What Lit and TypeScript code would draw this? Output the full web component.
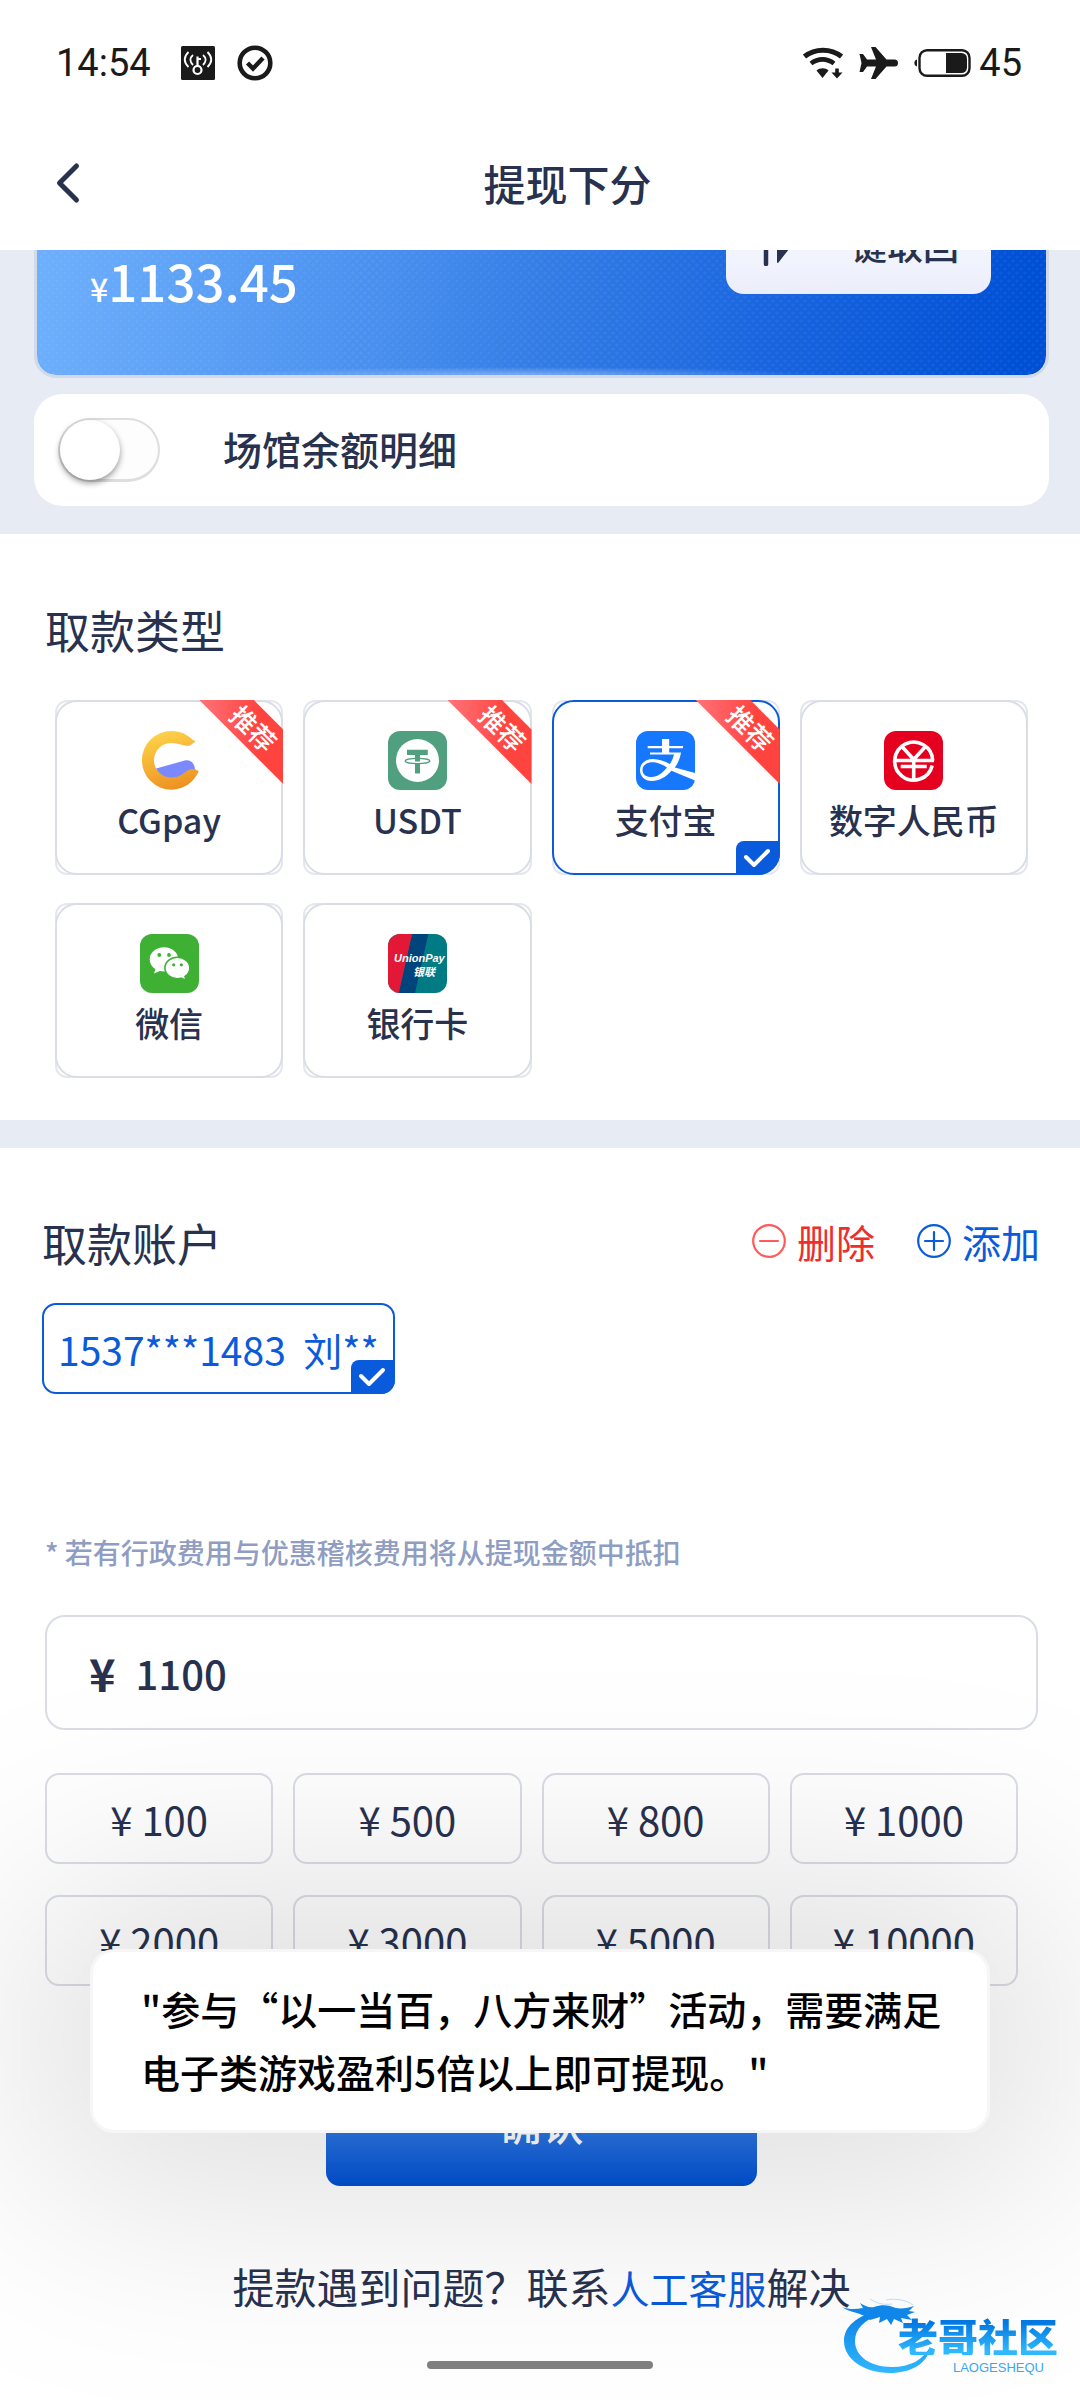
import { LitElement, html, css, svg, nothing } from "lit";
import { customElement, state } from "lit/decorators.js";
import { classMap } from "lit/directives/class-map.js";

interface PayType {
  id: string;
  label: string;
  hot?: boolean;
}

const PAY_TYPES: PayType[] = [
  { id: "cgpay", label: "CGpay", hot: true },
  { id: "usdt", label: "USDT", hot: true },
  { id: "alipay", label: "支付宝", hot: true },
  { id: "ecny", label: "数字人民币" },
  { id: "wechat", label: "微信" },
  { id: "union", label: "银行卡" },
];

const AMOUNTS = [100, 500, 800, 1000, 2000, 3000, 5000, 10000];

const PAY_ICONS: Record<string, unknown> = {
  cgpay: svg`
    <defs>
      <linearGradient id="gold" x1="0.3" y1="0" x2="0.6" y2="1">
        <stop offset="0" stop-color="#fed34a" />
        <stop offset="1" stop-color="#ed9121" />
      </linearGradient>
    </defs>
    <path fill="#7b89ff" d="M16 37.4 44 29.8C50 28 55 32 55 39 45 38 44 47 31.3 47 24 47 18.500 43 16 37.400z" />
    <path fill="url(#gold)" d="M55.700 10C52 13 50 15.500 45.500 14.800 41 14 37 12 31.300 12A17.300 17.300 0 1 0 31.300 46.600C44 46.600 45 38 53 38 55.500 38 57 39.300 58.700 40.300 54 51.500 43.500 58.700 31.300 58.700A29.300 29.300 0 1 1 31.300 0C41 0 48 4 52.500 8.800 53.500 9.600 54.500 9.800 55.700 10z" />`,
  usdt: svg`
    <rect width="59" height="59" rx="12" fill="#50a080" />
    <circle cx="29.500" cy="29.500" r="21.500" fill="#fff" />
    <path fill="#50a080" d="M19 18.700h20.800V24H32v18.500h-5V24h-8z" />
    <path fill="#fff" d="M26 30.500h7v2h-7z" />
    <ellipse cx="29.500" cy="30" rx="12.400" ry="2.600" fill="none" stroke="#50a080" stroke-width="1.200" />`,
  alipay: svg`
    <rect width="59" height="59" rx="12" fill="#1677ff" />
    <g fill="#fff">
      <path d="M26 8h7.200v7H47v2.200H33.200v4.200H45c-1 6-3.200 11-6.200 15.200L59 42v7.500L35.500 39.800C29.500 46.500 23 50 16 50 8 50 4 45 4 39c0-6.500 5.500-11 13-11 6 0 11.500 2.400 17 5 1.800-2.800 3.200-6 4-9.400H14v-2.200h12v-4.200H11.700V15H26z" />
    </g>
    <path fill="#1677ff" d="M31 36.500c-5-3.200-9.500-5.200-14.500-5.200-6 0-10 3.200-10 7.700 0 4.400 3.500 7 9 7 6 0 11-4 15.500-9.500z" />`,
  ecny: svg`
    <rect width="59" height="59" rx="12" fill="#e6001f" />
    <g fill="none" stroke="#fff" stroke-width="3.600">
      <path d="M48.700 29.500A19 19 0 1 0 48.200 34.500" />
      <path d="M9.500 29.500H50M16.700 35.500H42.700M29.700 28v21M17.500 15l12.200 13.500L42 15" />
    </g>`,
  wechat: svg`
    <rect width="59" height="59" rx="12" fill="#3eb135" />
    <path fill="#fff" d="M24 13.200c7.900 0 14.300 5.300 14.300 12S31.900 37.400 24 37.400c-1.500 0-2.900-.2-4.200-.5L14 39.500l1.400-4.300c-3.500-2.200-5.700-5.800-5.700-10 0-6.700 6.400-12 14.300-12z" />
    <path fill="#fff" stroke="#3eb135" stroke-width="1.600" d="M37.400 23.200c6.900 0 12.500 4.800 12.500 10.800 0 3.500-2 6.500-4.900 8.500l1.200 4-5-2.300c-1.200.3-2.400.5-3.800.5-6.900 0-12.500-4.800-12.500-10.700s5.600-10.800 12.500-10.800z" />
    <g fill="#3eb135">
      <circle cx="19.300" cy="21" r="1.900" /><circle cx="29" cy="21" r="1.900" />
      <circle cx="33.700" cy="30.800" r="1.600" /><circle cx="41.300" cy="30.800" r="1.600" />
    </g>`,
  union: svg`
    <defs><clipPath id="uc"><rect width="59" height="59" rx="12" /></clipPath></defs>
    <g clip-path="url(#uc)">
      <rect width="59" height="59" fill="#007b84" />
      <path fill="#00447c" d="M24 0h16.300L27 59H10.700z" />
      <path fill="#e31837" d="M0 0h24L10.700 59H0z" />
    </g>
    <g fill="#fff" font-style="italic" font-weight="700">
      <text x="6" y="28" font-size="11" font-family="Liberation Sans, sans-serif">UnionPay</text>
      <text x="25" y="42" font-size="11" font-family="Noto Sans CJK SC, sans-serif">银联</text>
    </g>`,
};

const tick = html`<span class="tick" aria-hidden="true"
  ><svg viewBox="0 0 44 34" width="44" height="34">
    <path d="M10 16l8 8L32 10" fill="none" stroke="#fff" stroke-width="4" stroke-linecap="round" stroke-linejoin="round" /></svg
></span>`;

@customElement("app-root")
export class AppRoot extends LitElement {
  @state() private payType = "alipay";
  @state() private amount = "1100";

  static styles = css`
    :host {
      --ink: #28324f;
      --blue: #0a5bdb;
      --line: #dadde5;
      --band: #e7ebf4;
      display: block;
      position: relative;
      min-height: 100vh;
      overflow: hidden;
      background: #fff;
      color: var(--ink);
      font-family: "Noto Sans CJK SC", sans-serif;
      font-size: 39px;
    }
    * {
      box-sizing: border-box;
    }
    button,
    input {
      font: inherit;
      color: inherit;
      margin: 0;
      padding: 0;
      background: none;
      border: 0;
    }
    svg {
      display: block;
      flex: none;
    }
    h1,
    h2,
    p {
      margin: 0;
      font-weight: 400;
    }

    .top {
      position: relative;
      z-index: 1;
      background: #fff;
    }
    .status {
      display: flex;
      align-items: center;
      justify-content: space-between;
      height: 118px;
      padding: 8px 58px 0 56px;
      color: #1a1a1a;
      font-family: Roboto, sans-serif;
      font-size: 38px;
    }
    .status-side {
      display: flex;
      align-items: center;
    }
    .left {
      gap: 22px;
    }
    .left .key {
      margin-left: 8px;
    }
    .right {
      gap: 16px;
    }
    .battery {
      display: flex;
      align-items: center;
      gap: 8px;
    }
    .bar {
      display: grid;
      grid-template-columns: auto 1fr;
      align-items: center;
      gap: 27px;
      height: 132px;
      padding: 0 54px 3px;
    }
    .bar h1 {
      font-size: 42px;
      font-weight: 500;
      line-height: 60px;
      text-align: center;
    }

    .wallet {
      padding: 0 31px 28px 34px;
      background: var(--band);
    }
    .balance {
      display: flex;
      align-items: flex-end;
      justify-content: space-between;
      height: 240px;
      margin-top: -112px;
      padding: 0 55px 57px 53px;
      border: solid #d3d9e6;
      border-width: 3px;
      border-radius: 22px;
      color: #fff;
      background:
        radial-gradient(ellipse 300px 8px at 48% 100%, rgba(190, 215, 255, 0.5), transparent) padding-box,
        radial-gradient(circle, rgba(255, 255, 255, 0.05) 1px, transparent 2px) 0 0 / 8px 8px padding-box,
        radial-gradient(circle, rgba(255, 255, 255, 0.05) 1px, transparent 2px) 4px 4px / 8px 8px padding-box,
        linear-gradient(98deg, #70b1fd 0%, #4a91ef 34%, #357ee6 50%, #1a66df 72%, #0050d6 97%) padding-box;
    }
    .cash {
      font-size: 51px;
      font-weight: 500;
      line-height: 60px;
    }
    .cash small {
      font-size: 32px;
    }
    .collect {
      display: flex;
      align-items: center;
      gap: 26px;
      height: 84px;
      margin-bottom: 24px;
      padding: 0 32px 16px 37px;
      border-radius: 18px;
      background: linear-gradient(#fafcff, #ebedfb);
      color: var(--ink);
      font-size: 36px;
      font-weight: 500;
    }
    .venue {
      display: flex;
      align-items: center;
      gap: 63px;
      height: 112px;
      margin-top: 16px;
      padding: 0 24px;
      border-radius: 28px;
      background: #fff;
      font-weight: 500;
    }
    .venue label {
      padding-bottom: 5px;
    }
    .switch {
      appearance: none;
      width: 102px;
      height: 64px;
      border: 2px solid #dedede;
      border-bottom-width: 3px;
      border-radius: 32px;
      background: #fdfdfd;
    }
    .switch::before {
      content: "";
      display: block;
      width: 60px;
      height: 60px;
      border-radius: 50%;
      background: #fff;
      box-shadow: 0 3px 6px rgba(0, 0, 0, 0.4);
    }
    .switch:checked {
      background: var(--blue);
    }
    .switch:checked::before {
      margin-left: 38px;
    }

    .types {
      padding: 66px 52px 42px 55px;
      border-bottom: 28px solid var(--band);
    }
    h2 {
      font-size: 45px;
      line-height: 60px;
    }
    .types h2 {
      margin: 0 0 40px -10px;
    }
    .type-grid {
      display: grid;
      grid-template-columns: repeat(4, 1fr);
      gap: 28px 20px;
    }
    .type {
      position: relative;
      display: flex;
      flex-direction: column;
      align-items: center;
      height: 175px;
      padding-top: 29px;
      border: 2px solid #e4e7ee;
      border-radius: 12px;
      font-size: 34px;
      font-weight: 500;
      line-height: 48px;
    }
    .type::before {
      content: "";
      position: absolute;
      inset: -2px;
      border: 2px solid var(--line);
      border-radius: 22px;
    }
    .type.on::before {
      border-color: var(--blue);
    }
    .type span.name {
      margin-top: 6px;
    }
    .ribbon {
      position: absolute;
      top: -2px;
      right: -2px;
      width: 84px;
      height: 84px;
      clip-path: polygon(0 0, 65% 0, 100% 35%, 100% 100%);
      background: linear-gradient(90deg, #ff7378, #ff4440 70%);
      color: #fff;
      font-size: 26px;
    }
    .ribbon b {
      position: absolute;
      top: 10px;
      left: 28px;
      width: 54px;
      line-height: 36px;
      font-weight: 500;
      text-align: center;
      transform: rotate(45deg);
    }
    .tick {
      position: absolute;
      right: -2px;
      bottom: -2px;
      border-radius: 8px 0 22px 0;
      overflow: hidden;
      background: var(--blue);
    }

    .account {
      padding: 65px 40px 0 42px;
    }
    .row {
      display: flex;
      align-items: center;
      gap: 42px;
      height: 60px;
    }
    .row h2 {
      flex: 1;
    }
    .act {
      display: flex;
      align-items: center;
      gap: 11px;
      padding-bottom: 4px;
      line-height: 56px;
      color: var(--blue);
    }
    .act.del {
      color: #ee2d2d;
    }
    .accounts {
      display: flex;
      min-height: 229px;
      margin-top: 30px;
      align-items: flex-start;
    }
    .chip {
      position: relative;
      height: 91px;
      padding: 0 14px;
      border: 2px solid var(--blue);
      border-radius: 14px;
      color: var(--blue);
    }
    .chip .tick {
      border-radius: 8px 0 14px 0;
    }

    .withdraw {
      padding: 0 42px 82px 45px;
    }
    .note {
      color: #8f9dc2;
      font-size: 28px;
      font-weight: 500;
      line-height: 40px;
    }
    .field {
      display: flex;
      align-items: center;
      gap: 20px;
      height: 115px;
      margin: 43px 0;
      padding: 0 42px;
      border: 2px solid var(--line);
      border-radius: 20px;
      font-size: 40px;
      font-weight: 500;
    }
    .field label {
      font-size: 45px;
      font-weight: 700;
    }
    .field input {
      flex: 1;
      min-width: 0;
      height: 100%;
      outline: 0;
    }
    .amounts {
      display: grid;
      grid-template-columns: repeat(4, 1fr);
      gap: 31px 20px;
      padding-right: 20px;
    }
    .amounts button {
      height: 91px;
      border: 2px solid var(--line);
      border-radius: 14px;
      font-size: 40px;
    }
    .confirm {
      display: block;
      width: 431px;
      height: 124px;
      margin: 76px auto 70px;
      padding-bottom: 4px;
      border-radius: 14px;
      background: linear-gradient(#63a5fb, #0050d3);
      color: #fff;
      font-size: 42px;
      font-weight: 500;
    }
    .help {
      text-align: center;
      font-size: 42px;
      line-height: 60px;
    }
    .help a {
      color: var(--blue);
      font-size: 39px;
      text-decoration: none;
    }

    .overlay {
      position: absolute;
      left: 90px;
      right: 90px;
      bottom: 267px;
      pointer-events: none;
    }
    .overlay::before {
      content: "";
      position: absolute;
      inset: -60px;
      border-radius: 80px;
      background: rgba(0, 0, 0, 0.13);
      filter: blur(110px);
    }
    .toast {
      position: relative;
      padding: 25px 40px 27px 48px;
      border: 3px solid #f6f6f6;
      border-radius: 24px;
      background: #fff;
      color: #000;
      font-weight: 500;
      line-height: 63px;
    }
    .home {
      position: absolute;
      left: 50%;
      bottom: 31px;
      width: 226px;
      height: 8px;
      border-radius: 4px;
      background: #808080;
      transform: translateX(-50%);
    }
    .mark {
      position: absolute;
      right: 16px;
      bottom: 22px;
      width: 222px;
      height: 80px;
    }
    .mark svg {
      position: absolute;
      inset: 0;
    }
    .mark-text {
      position: absolute;
      top: 19px;
      right: 6px;
      font-size: 40px;
      font-weight: 900;
      line-height: 38px;
      color: transparent;
      background: linear-gradient(#0278e2 15%, #30b8fd 90%);
      background-clip: text;
      -webkit-background-clip: text;
    }
    .mark-sub {
      position: absolute;
      top: 63px;
      right: 20px;
      font-family: "Liberation Sans", sans-serif;
      font-size: 13px;
      line-height: 14px;
      color: #3aa6f4;
    }
  `;

  private renderType(t: PayType) {
    const on = t.id === this.payType;
    return html`<button
      class=${classMap({ type: true, on })}
      aria-pressed=${on ? "true" : "false"}
      @click=${() => (this.payType = t.id)}
    >
      <svg viewBox="0 0 59 59" width="59" height="59" aria-hidden="true">${PAY_ICONS[t.id]}</svg>
      <span class="name">${t.label}</span>
      ${t.hot ? html`<span class="ribbon"><b>推荐</b></span>` : nothing}
      ${on ? tick : nothing}
    </button>`;
  }

  render() {
    return html`
      <header class="top">
        <div class="status">
          <div class="status-side left">
            <span>14:54</span>
            <svg class="key" viewBox="0 0 34 34" width="34" height="34">
              <rect width="34" height="34" rx="1.500" fill="#1a1a1a" />
              <g fill="none" stroke="#fff" stroke-width="1.800">
                <circle cx="16.500" cy="24" r="4" stroke-width="2.200" />
                <path d="M16.500 20V10.500M16.500 13h3.500" stroke-width="2.200" />
                <path d="M12 9c-3.500 3-3.500 6.500 0 10M7.500 6C2.500 11 2.500 16 7.500 21M22 9c3.500 3 3.500 6.500 0 10M26.500 6c5 5 5 10 0 15" />
              </g>
            </svg>
            <svg viewBox="0 0 36 36" width="36" height="36">
              <circle cx="18" cy="18" r="15.300" fill="none" stroke="#1a1a1a" stroke-width="4.600" />
              <path d="M10.500 18l5.500 5.500L26 13" fill="none" stroke="#1a1a1a" stroke-width="4.400" />
            </svg>
          </div>
          <div class="status-side right">
            <svg viewBox="0 0 40 32" width="40" height="32" fill="none" stroke="#1a1a1a">
              <path d="M1.500 9.500C12 1 28 1 38.500 9.500" stroke-width="5" />
              <path d="M8 16.500c7-5.500 16-5.500 23 0" stroke-width="4.600" />
              <path d="M13.500 23.500c3.500-3 9-3 12 0L19.500 31z" fill="#1a1a1a" stroke="none" />
              <path d="M34 21.500v5" stroke-width="3.600" />
              <path d="M28.500 25.500h11L34 31.500z" fill="#1a1a1a" stroke="none" />
            </svg>
            <svg viewBox="0 0 39 32" width="39" height="32" fill="#1a1a1a">
              <path d="M12 0h4.500l11 12.500H35.500a3.500 3.500 0 0 1 0 7H27.500L16.500 32H12l5-12.500H8L4 25H.5l2-9-2-9H4l4 5.500h9z" />
            </svg>
            <div class="battery">
              <svg viewBox="0 0 57 28" width="57" height="28">
                <path d="M3 10.500C-.5 11-.5 17 3 17.500z" fill="#1a1a1a" />
                <rect x="5.500" y="1.200" width="50" height="25.600" rx="7.500" fill="none" stroke="#1a1a1a" stroke-width="2.400" />
                <path d="M32 4h15.500a5.500 5.500 0 0 1 5.500 5.500v9a5.500 5.500 0 0 1-5.500 5.500H32z" fill="#1a1a1a" />
              </svg>
              <span>45</span>
            </div>
          </div>
        </div>
        <div class="bar">
          <button class="back" aria-label="返回">
            <svg viewBox="0 0 28 42" width="28" height="42">
              <path d="M22.500 4L5.500 21l17 17" fill="none" stroke="#28324f" stroke-width="5" stroke-linecap="round" stroke-linejoin="round" />
            </svg>
          </button>
          <h1>提现下分</h1>
        </div>
      </header>

      <section class="wallet">
        <div class="balance">
          <div class="cash"><small>¥</small>1133.45</div>
          <button class="collect">
            <svg viewBox="0 0 26 44" width="26" height="44">
              <path d="M3 42V6" stroke="#28324f" stroke-width="4.500" stroke-linecap="round" fill="none" />
              <path d="M14 2v38q0 1.500 1.500.5L26 27v-2h-8V2z" fill="#28324f" />
            </svg>
            <span>一键取回</span>
          </button>
        </div>
        <div class="venue">
          <input class="switch" id="venue" type="checkbox" role="switch" />
          <label for="venue">场馆余额明细</label>
        </div>
      </section>

      <section class="types">
        <h2>取款类型</h2>
        <div class="type-grid">${PAY_TYPES.map((t) => this.renderType(t))}</div>
      </section>

      <section class="account">
        <div class="row">
          <h2>取款账户</h2>
          <button class="act del">
            <svg viewBox="0 0 34 34" width="34" height="34" fill="none" stroke="#ff5a5a" stroke-width="2.200" stroke-linecap="round">
              <circle cx="17" cy="17" r="15.800" /><path d="M8 17h18" />
            </svg>
            删除
          </button>
          <button class="act">
            <svg viewBox="0 0 34 34" width="34" height="34" fill="none" stroke="#0a5bdb" stroke-width="2.200" stroke-linecap="round">
              <circle cx="17" cy="17" r="15.800" /><path d="M8 17h18M17 8v18" />
            </svg>
            添加
          </button>
        </div>
        <div class="accounts">
          <button class="chip" aria-pressed="true">1537***1483&nbsp; 刘**${tick}</button>
        </div>
      </section>

      <section class="withdraw">
        <p class="note">* 若有行政费用与优惠稽核费用将从提现金额中抵扣</p>
        <div class="field">
          <label for="amount">¥</label>
          <input
            id="amount"
            inputmode="numeric"
            .value=${this.amount}
            @input=${(e: Event) => (this.amount = (e.target as HTMLInputElement).value)}
          />
        </div>
        <div class="amounts">
          ${AMOUNTS.map((n) => html`<button @click=${() => (this.amount = String(n))}>¥ ${n}</button>`)}
        </div>
        <button class="confirm">确认</button>
        <p class="help">提款遇到问题？联系<a href="#service">人工客服</a>解决</p>
      </section>

      <div class="overlay">
        <div class="toast" role="alert">"参与“以一当百，八方来财”活动，需要满足电子类游戏盈利5倍以上即可提现。"</div>
      </div>
      <div class="home"></div>
      <div class="mark">
        <svg viewBox="0 0 222 80" width="222" height="80" aria-hidden="true">
          <defs>
            <linearGradient id="ring" x1="0" y1="0" x2="0" y2="1">
              <stop offset="0" stop-color="#0a7fe6" />
              <stop offset="1" stop-color="#30b8fd" />
            </linearGradient>
          </defs>
          <path fill="url(#ring)" d="M36 13C14 18 2 29 2 43c0 18 20 32 46 32 20 0 38-9 40-26-7 13-20 20-38 20-22 0-37-11-37-26 0-12 9-21 26-27z" />
          <path fill="#0f86e8" d="M0 9c8 3 14 2 21 1l-3-5c5 3 9 5 14 4 8-3 15-2 22 1 6 1 12 0 18-2l-5 5 6 1-8 3 5 5-11-2 2 5-9-4-3 6-4-6-8 4 1-6-10 3C20 14 8 15 0 9z" />
          <path fill="none" stroke="#b9def9" stroke-width="1" d="M28 1c8 5 14 6 22 5M44 2c10-2 20 0 27 5" />
        </svg>
        <span class="mark-text">老哥社区</span>
        <span class="mark-sub">LAOGESHEQU</span>
      </div>
    `;
  }
}
